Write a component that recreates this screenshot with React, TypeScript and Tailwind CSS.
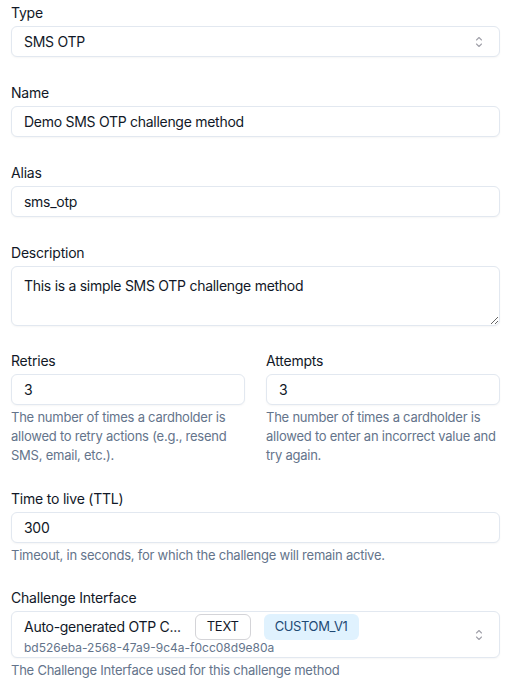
import React from "react";

function Chevrons() {
  return (
    <svg width="8" height="12" viewBox="0 0 8 12" fill="none" stroke="#a1a1aa" strokeWidth="1.1" strokeLinecap="round" strokeLinejoin="round">
      <path d="M1.5 4 L4 1.5 L6.5 4" />
      <path d="M1.5 8 L4 10.5 L6.5 8" />
    </svg>
  );
}

function Label({ children }: { children: React.ReactNode }) {
  return <div className="text-sm leading-5 tracking-[-0.015em] text-[#111827] mb-[3px]">{children}</div>;
}

function Help({ children }: { children: React.ReactNode }) {
  return <div className="mt-[3px] text-[13px] leading-[19px] tracking-[-0.018em] text-[#64748b]">{children}</div>;
}

function Input({ value }: { value: string }) {
  return (
    <div className="h-[31px] rounded-md border border-[#e2e8f0] bg-white px-3 flex items-center text-sm tracking-[-0.02em] text-[#111827] shadow-[0_1px_2px_rgba(0,0,0,0.04)]">
      {value}
    </div>
  );
}

export default function App() {
  return (
    <div className="bg-white min-h-[691px] px-[11px] pr-[16px] pt-[3px] font-['Inter','Noto_Sans',sans-serif]">
      <div>
        <Label>Type</Label>
        <div className="h-[31px] rounded-md border border-[#e2e8f0] bg-white pl-3 pr-[16px] flex items-center justify-between text-sm tracking-[-0.02em] text-[#111827] shadow-[0_1px_2px_rgba(0,0,0,0.04)]">
          <span>SMS OTP</span>
          <Chevrons />
        </div>
      </div>

      <div className="mt-[26px]">
        <Label>Name</Label>
        <Input value="Demo SMS OTP challenge method" />
      </div>

      <div className="mt-[26px]">
        <Label>Alias</Label>
        <Input value="sms_otp" />
      </div>

      <div className="mt-[26px]">
        <Label>Description</Label>
        <textarea
          readOnly
          value="This is a simple SMS OTP challenge method"
          className="block w-full h-[60px] rounded-md border border-[#e2e8f0] bg-white px-3 py-[9px] text-sm leading-5 tracking-[-0.02em] text-[#111827] shadow-[0_1px_2px_rgba(0,0,0,0.04)] outline-none"
        />
      </div>

      <div className="mt-[25px] grid grid-cols-2 gap-x-[21px]">
        <div>
          <Label>Retries</Label>
          <Input value="3" />
          <Help>The number of times a cardholder is allowed to retry actions (e.g., resend SMS, email, etc.).</Help>
        </div>
        <div>
          <Label>Attempts</Label>
          <Input value="3" />
          <Help>The number of times a cardholder is allowed to enter an incorrect value and try again.</Help>
        </div>
      </div>

      <div className="mt-[24px]">
        <Label>Time to live (TTL)</Label>
        <Input value="300" />
        <Help>Timeout, in seconds, for which the challenge will remain active.</Help>
      </div>

      <div className="mt-[23px]">
        <Label>Challenge Interface</Label>
        <div className="h-[47px] rounded-md border border-[#e2e8f0] bg-white pl-3 pr-[16px] flex items-center justify-between shadow-[0_1px_2px_rgba(0,0,0,0.04)]">
          <div className="flex flex-col self-start pt-[2px]">
            <div className="flex items-center h-[26px]">
              <span className="text-sm tracking-[-0.02em] text-[#111827] whitespace-nowrap">Auto-generated OTP C...</span>
              <span className="ml-[14px] h-[26px] px-[11px] rounded-md border border-[#d4d4d8] text-[13px] tracking-[-0.02em] text-[#111827] flex items-center">TEXT</span>
              <span className="ml-[13px] h-[26px] px-[11px] rounded-md bg-[#e0f2fe] text-[13px] tracking-[-0.03em] text-[#1e4a74] flex items-center">CUSTOM_V1</span>
            </div>
            <div className="text-[12px] leading-[16px] text-[#64748b]">bd526eba-2568-47a9-9c4a-f0cc08d9e80a</div>
          </div>
          <Chevrons />
        </div>
        <Help>The Challenge Interface used for this challenge method</Help>
      </div>
    </div>
  );
}
